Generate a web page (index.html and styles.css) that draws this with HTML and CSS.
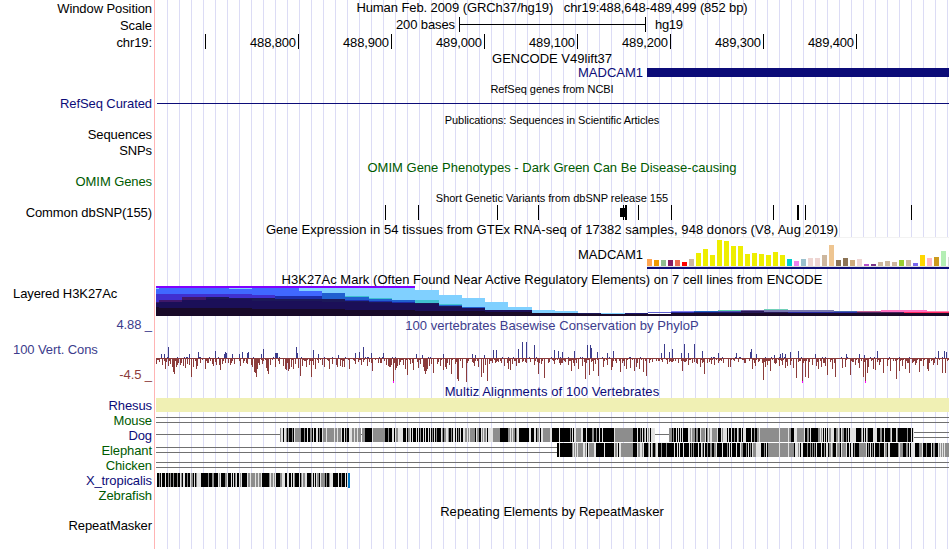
FILE: index.html
```html
<!DOCTYPE html>
<html lang="en">
<head>
<meta charset="utf-8">
<title>Genome tracks</title>
<link rel="stylesheet" href="styles.css">
</head>
<body>
<main class="browser" id="browser"></main>
<script src="tracks.js"></script>
</body>
</html>
```
FILE: styles.css
```css
body { margin: 0; background: #fff; font-family: "Liberation Sans", Arial, sans-serif; font-size: 13px; color: #000; }
.browser { width: 949px; height: 549px; overflow: hidden; display: flex; flex-direction: column;
  background: linear-gradient(#ffb4b4, #ffb4b4) 154px 0 / 1px 100% no-repeat,
    repeating-linear-gradient(90deg, #dcdcf5 0 1px, transparent 1px 12px) 167px 0 / 782px 100% no-repeat; }
.row { display: grid; grid-template-columns: 155px 794px; grid-template-rows: 100%; flex: none; align-items: center; }
.label { padding-right: 3px; text-align: right; white-space: pre; line-height: 15px; letter-spacing: -0.09px; }
.label.left { text-align: left; padding-left: 13px; }
.label.top { align-self: start; }
.label.lift { padding-bottom: 2px; }
.title { text-align: center; white-space: pre; line-height: 15px; }
.small { font-size: 11px; padding-top: 2px; }
.title.lift { padding-bottom: 2px; }
.title.low { padding-top: 2px; }
.small.low { padding-top: 4px; }
.navy { color: #0c0c78; }
.green { color: #005a00; }
.cons { color: #3c3c8c; }
.red { color: #8c3c3c; }
.stack { display: flex; flex-direction: column; justify-content: space-between; height: 65px; align-self: start; margin-top: -16px; }
svg { display: block; }
svg text { font-size: 13px; }
```
FILE: tracks.js
```js
const X0 = 155, W = 794;
const browser = document.getElementById('browser');
const rect = (x, y, w, h, c) => `<rect x="${x}" y="${y}" width="${w}" height="${h}" fill="${c}"/>`;
const text = (x, y, w, s, c = '#000') => `<text x="${x}" y="${y}" textLength="${w}" fill="${c}">${s}</text>`;

// One browser row: label cell on the left, drawing or title on the right.
function row(y, h, label, body, cls = '') {
  const el = document.createElement('section');
  el.className = 'row';
  el.style.height = h + 'px';
  const data = body.startsWith('<rect') || body.startsWith('<text')
    ? `<svg width="${W}" height="${h}" viewBox="${X0} ${y} ${W} ${h}" shape-rendering="crispEdges">${body}</svg>`
    : body;
  el.innerHTML = (label.startsWith('<') ? label : `<div class="label ${cls}">${label}</div>`) + data;
  browser.append(el);
}
const title = (h, s, ls, cls = '') => row(0, h, '', `<div class="title ${cls}" style="letter-spacing:${ls}px">${s}</div>`);

// Runs such as "k3 g1 w2": black, grey, light; "_" is an unaligned gap, "@680" moves to x 680.
const shade = { k: '#000', g: '#8d8d8d', w: '#e2e2e2' };
function runs(x, y, s) {
  let out = '';
  for (const t of s.trim().split(/\s+/)) {
    const n = +t.slice(1);
    if (t[0] === '@') { x = n; continue; }
    if (shade[t[0]]) out += rect(x, y, n, 14, shade[t[0]]);
    x += n;
  }
  return out;
}
const rule = (x1, x2, y) => rect(x1, y, x2 - x1, 1, '#707070');

title(17, 'Human Feb. 2009 (GRCh37/hg19)   chr19:488,648-489,499 (852 bp)', -0.09, 'lift');
browser.lastChild.firstChild.textContent = 'Window Position';
row(17, 17, 'Scale', text(396, 29, 59, '200 bases') + rect(459, 17, 1, 15, '#000') + rect(459, 24, 187, 1, '#000') + rect(645, 17, 1, 15, '#000') + text(655, 29, 28, 'hg19'));
let ruler = rect(205, 34, 1, 15, '#000');
['488,800', '488,900', '489,000', '489,100', '489,200', '489,300', '489,400'].forEach((s, i) => {
  const x = 298 + i * 93;
  ruler += rect(x, 34, 1, 15, '#000') + text(x - 48, 47, 46, s);
});
row(34, 17, 'chr19:', ruler);
title(15, 'GENCODE V49lift37', 0);
row(66, 16, '', text(578, 77, 65, 'MADCAM1', '#0c0c78') + rect(647, 68, 302, 9, '#0c0c78'));
title(15, 'RefSeq genes from NCBI', -0.04, 'small lift');
row(97, 14, 'RefSeq Curated', rect(157, 103, 792, 1, '#0c0c78'), 'navy lift');
title(17, 'Publications: Sequences in Scientific Articles', -0.07, 'small');
row(0, 15, 'Sequences', '<div></div>', 'lift');
row(0, 17, 'SNPs', '<div></div>', 'lift');
title(15, 'OMIM Gene Phenotypes - Dark Green Can Be Disease-causing', 0.01, 'green');
row(0, 13, 'OMIM Genes', '<div></div>', 'green');
title(17, 'Short Genetic Variants from dbSNP release 155', -0.02, 'small low');

let snps = rect(620, 208, 6, 9, '#000');
for (const x of [385, 418, 497, 538, 623, 625, 626, 638, 671, 773, 797, 798, 805, 911]) snps += rect(x, 205, 1, 15, '#000');
row(205, 15, 'Common dbSNP(155)', snps);
title(17, 'Gene Expression in 54 tissues from GTEx RNA-seq of 17382 samples, 948 donors (V8, Aug 2019)', 0.055, 'low');

const expression = [[7,'#ffa54f'],[6,'#ee9a00'],[6,'#8fbc8f'],[6,'#8b1c62'],[6,'#ee6a50'],[4,'#f00'],[7,'#cdb79e'],
  ...[13,17,11,26,25,20,20,12,13,12,11,14,11].map(h => [h, '#eeee00']),
  [7,'#00cdcd'],[5,'#ee82ee'],[7,'#9ac0cd'],[8,'#eed5d2'],[8,'#eed5d2'],[11,'#cdb79e'],[21,'#eec591'],[6,'#8b7355'],[8,'#8b7355'],
  [6,'#cdaa7d'],[7,'#eed5d2'],[2,'#b452cd'],[2,'#7a378b'],[4,'#cdb79e'],[5,'#cdb79e'],[4,'#cdb79e'],[6,'#9acd32'],[6,'#cdb79e'],
  [3,'#7a67ee'],[11,'#ffd700'],[8,'#ffb6c1'],[9,'#cd9b1d'],[15,'#b4eeb4'],[9,'#d9d9d9']];
let gtex = rect(647, 237, 302, 30, '#f2f2f2') + rect(647, 238, 302, 28, '#fff') + text(578, 259, 65, 'MADCAM1');
expression.forEach(([h, c], i) => gtex += rect(647 + i * 7, 266 - h, 5, h, c));
row(237, 35, '', gtex + rect(647, 266, 302, 1, '#ddd') + rect(647, 267, 302, 2, '#0c0c78'));
title(14, 'H3K27Ac Mark (Often Found Near Active Regulatory Elements) on 7 cell lines from ENCODE', 0.04);

// Layered signal: every layer is a list of [start x, top y] steps down to y 316.
const layers = [
  ['#80d0ff', [[156,288],[415,290],[439,295],[462,298],[485,302],[508,307],[532,310],[555,311],[578,313],[625,316]]],
  ['#4068ff', [[156,289],[159,288],[229,289],[252,288],[299,291],[322,316]]],
  ['#40c0d0', [[345,296],[369,298],[392,316],[415,300],[439,304],[462,316]]],
  ['#2060d0', [[322,293],[345,297],[369,299],[392,300],[415,303],[439,305],[462,307],[485,316]]],
  ['#4030d0', [[156,294],[252,295],[275,316]]],
  ['#1c2ca8', [[275,296],[322,299],[345,300],[369,301],[392,302],[415,316]]],
  ['#401868', [[156,302],[159,300],[182,297],[206,316]]],
  ['#1c1858', [[206,297],[229,298],[275,299],[345,301],[369,302],[392,303],[439,306],[462,308],[485,310],[508,312],[532,313],[601,314],[625,316]]],
  ['#1b0f58', [[156,303],[159,302],[182,300],[206,299],[252,301],[322,302],[369,303],[415,304],[439,307],[462,308],[485,310],[532,316]]],
  ['#190a28', [[156,307],[159,308],[252,309],[345,310],[415,311],[485,312],[532,313],[578,314],[671,313],[949,316]]]
];
let h3k = rect(156, 286, 259, 2, '#8000ff');
for (const [c, steps] of layers) steps.forEach(([x, y], i) => {
  const end = i + 1 < steps.length ? steps[i + 1][0] : 949;
  if (y < 316) h3k += rect(x, y, end - x, 316 - y, c);
});
for (const [x, y, w, h, c] of [
  [625,313,23,1,'#1c1870'],[648,312,46,1,'#6060d0'],[671,311,23,1,'#8080f0'],[671,312,23,1,'#2828a0'],
  [694,311,24,1,'#2060c0'],[694,312,24,1,'#1c1870'],[718,310,23,1,'#60d0b0'],[718,311,23,1,'#5050b0'],[718,312,23,1,'#1c1870'],
  [741,310,23,1,'#7060a0'],[741,311,47,2,'#281858'],[764,309,24,1,'#70d0b8'],[764,310,70,2,'#7878b0'],
  [788,312,69,1,'#2828a0'],[834,311,23,1,'#4868b0'],[857,311,24,1,'#c06090'],[857,312,47,1,'#502060'],
  [881,310,46,2,'#ff70c0'],[904,312,45,1,'#ff2860'],[927,311,22,1,'#ff80b0']]) h3k += rect(x, y, w, h, c);
row(286, 30, 'Layered H3K27Ac', h3k, 'left top');
title(17, '100 vertebrates Basewise Conservation by PhyloP', 0.03, 'cons low');

const down = '156:5,159:2,162:6,165:10,168:7,170:5,172:8,173:13,174:15,176:8,177:6,178:4,180:6,183:7,185:9,187:5,189:6,191:18,193:8,196:10,197:7,200:4,205:10,208:4,212:5,213:7,216:6,219:6,220:11,222:5,228:4,230:6,234:5,240:7,243:4,247:5,251:6,252:8,254:13,255:14,256:18,257:10,259:6,262:5,266:9,267:12,268:15,270:6,275:8,279:5,283:7,285:10,286:11,288:12,289:10,291:8,293:10,295:5,298:9,300:17,302:7,306:8,309:6,311:18,313:6,315:10,318:4,322:6,324:8,329:10,332:5,336:6,337:8,340:7,342:8,344:8,349:10,355:5,361:6,367:7,372:12,380:4,386:6,388:7,389:8,390:8,391:6,393:24,395:11,396:9,397:7,399:6,403:6,405:10,407:16,410:5,413:11,418:9,420:5,423:8,424:12,425:15,426:12,427:10,429:7,431:5,433:14,437:5,440:7,443:11,445:8,446:10,449:6,451:15,455:5,457:20,458:22,462:9,466:23,474:7,478:8,481:18,483:14,485:6,487:22,489:5,492:4,501:4,504:7,508:10,510:11,512:5,516:7,519:4,525:3,530:3,534:6,538:15,541:5,544:19,548:4,554:5,560:6,565:3,568:6,571:12,574:7,578:10,582:7,585:20,589:16,593:12,595:5,598:17,603:8,607:6,611:11,612:8,616:4,620:13,624:7,626:10,630:9,634:12,636:8,639:10,643:13,646:17,649:4,662:3,667:5,682:12,688:6,692:4,697:5,700:8,704:15,711:5,714:6,718:4,728:8,730:8,744:4,752:10,755:7,763:21,765:8,767:6,770:12,775:5,779:7,782:6,785:9,787:7,790:6,793:9,796:19,802:23,805:18,808:19,812:6,816:7,818:10,821:8,825:7,827:16,832:10,835:18,842:9,845:8,850:16,855:6,859:9,863:18,865:23,867:14,868:8,873:10,875:11,879:6,883:14,887:7,890:12,896:20,899:12,902:7,905:10,909:14,915:6,919:13,923:7,927:10,928:12,933:6,937:6,942:14,945:14';
const up = '161:4,164:4,168:11,189:4,198:6,215:7,224:4,225:6,226:5,232:4,239:4,242:6,247:5,248:6,261:4,263:9,275:5,276:5,277:5,296:11,297:5,313:8,318:4,338:3,355:5,359:6,363:11,371:5,383:5,416:4,422:3,443:4,472:4,475:3,484:3,493:8,496:8,518:9,522:16,526:16,534:13,554:8,558:7,562:6,574:7,587:13,590:13,591:10,597:6,607:5,613:7,661:5,664:14,669:6,672:9,681:5,684:14,688:5,694:14,702:7,718:5,736:5,750:6,751:9,756:4,774:3,780:4,782:5,785:4,790:6,798:7,815:4,846:4,859:4,864:3,877:7,938:7,944:7,946:6';
const parse = s => s.split(',').map(p => p.split(':').map(Number));
let phylo = rect(156, 358, 793, 1, '#8c3c3c');
// Approximate low-amplitude bars between the listed peaks.
for (let x = 157; x < 949; x++) {
  const n = (x * 7919 + (x * x) % 97) % 13;
  if (n < 6) phylo += rect(x, 358, 1, [2, 3, 4, 2, 3, 5][n], '#8c3c3c');
  else if (n === 7) phylo += rect(x, 357, 1, 1, '#3c3c8c');
}
for (const [x, h] of parse(down)) phylo += rect(x, 358, 1, h + 1, '#8c3c3c');
for (const [x, h] of parse(up)) phylo += rect(x, 358 - h, 1, h, '#3c3c8c');
for (const x of [393, 802, 865]) phylo += rect(x, 381, 1, 2, '#f0f');
row(333, 51, '<div class="stack"><div class="label cons">4.88 _</div><div class="label cons left">100 Vert. Cons</div><div class="label red">-4.5 _</div></div>', phylo);
title(14, 'Multiz Alignments of 100 Vertebrates', 0.1, 'navy');

row(398, 15, 'Rhesus', rect(156, 398, 793, 14, '#f0f0b4'), 'navy');
row(413, 15, 'Mouse', rule(156, 949, 417) + rule(156, 949, 422), 'green');
const dog = `g1 w2 k1 w2 g1 k1 g1 k3 g1 k1 w1 g6 k3 g1 k2 w1 k2 g2 k1 w1 k2 w2 k1 g1 k2 w1 g3 w1 g7 w1 g2 w1 g3 w1 k2 w1 k1 g1 k2 w3 g2 w1 g2 w1 g3 _1 g3 k7 w1 g12 k3 g1 k3 w2 k1 w1 g2 w4 w1 k3 w1 k1 g2
 @410 w1 k1 w1 k3 w1 k1 w1 k1 g1 k2 w1 k1 w1 k2 w1 k1 w1 k1 g1 k1 w1 k1 g1 k4 w1 g1 k1 g2 w1 w1 g1 k2 g1 k1 w2 k1 w1 k1 g1 k1 w1 k2 w2 g2 w1 g1 w1 g5 k1 w1 g2 k2 w1 g1 w1 g2 w1 k1
 @493 g7 k8 g2 w1 g1 w1 g2 k1 g1 w2 @519 k10 w2 k3 w2 k1 g2 w1 k1 w2 @543 g7 w2 k7 w1 k10 g1 k1 w1 k1 w1 w1 g5 @583 k3 w1 k5 g2 k2 g1 k2 w1 k2 w1 k2 @605 k9 w1 g1 @616 g17 k4 w1 k2 g1 k1 w1 k1 g1 w1 k1 w1 g1 w1 k1 w3
 @669 g3 k1 g1 k2 w1 k1 w1 k1 @680 w1 k1 w1 k5 w2 g1 w1 g3 k1 g2 k2 w1 g2 g2 w1 k1 g1 w1 g1 w2 g5 w1 k3 w1 g1 @723 w4 k1 w1 k2 w1 k2 g1 k2 w1 g1 k2 w1 k1
 @746 k5 w1 k2 g1 k2 g2 w1 g19 w1 g8 w1 g2 k3 w3 g7 w1 k2 g2 k1 w1 k7 g2 w1 g1 w1 k1 w1 k1 w1 k1 w1 g2 w3 k2 g2 w1 g1 k1 w1 g2 k2 g1 k1 w1 k1 @856 k5 g1 w1 k1 w1 k1 w1 g1 @868 k5 w1 w3 k3 g2 k2 w1 @885 k5 g1 w1 k4 w1 g1 k1 @899 k8 g1 k3 w1 k1 w1`;
row(428, 15, 'Dog', rule(156, 280, 434) + rect(362, 428, 293, 14, shade.w) + rect(669, 428, 245, 14, shade.w) + rule(361, 362, 434) + rule(655, 669, 434) + rule(914, 949, 432) + rule(914, 949, 437) + runs(280, 428, dog), 'navy');
const elephant = `k2 w1 k12 g1 w1 g1 w1 g1 w1 g5 w2 g1 w1 k1 w1 g5 @596 k8 w1 k9 w1 g2 w1 k1 @621 g12 k4 w1 g2 w2 g1 w1 k4 g1 w1 k1 w1 g1 k2 g1 w1 @658 k3 g1 k4 g1 k7 w1 k2 w1 k1
 @680 k3 w1 k5 w1 k1 g1 k1 g1 k4 w1 k2 w1 g1 k1 w1 k2 g1 k2 g2 k2 g2 @717 k5 w1 k4 g1 k1 w1 k1 w1 k4 w1 k3 w1 g2 k3 g1 k1 w1 k1 g1 k1 w1 g3 @761 k3 g1 k1 w1 k1 @768 g11 w1 g8 w1 g5 k1 w3 g1 w1 k1 w2 k1
 @803 k4 g1 k2 g1 k1 g1 k1 g1 k1 w1 k4 w1 k2 g1 k1 w2 k1 g2 w1 g1 k3 w1 g3 k1 w1 g4 w1 k2 w1 k1 @853 k1 g1 k4 g7 w1 k1 g1 k1 w1 k1 g1 k1 w1 k4 g1 k4 w1 g2 k1 @890 k8 g1 w1 g3 k3 g2 k1 w1 k1 w1
 @915 k4 g3 w1 k3 g1 k4 w1 k1 g2 k3 w1 g1 w1 g1 w1 g1 w1 g6 w1`;
row(443, 15, 'Elephant', rule(156, 557, 447) + rule(156, 557, 452) + rect(557, 443, 392, 14, '#e2e2e2') + runs(557, 443, elephant), 'green');
row(458, 15, 'Chicken', rule(156, 949, 462) + rule(156, 949, 467), 'green');
const frog = `k2 g1 k1 w1 k3 w1 k2 g1 k1 g1 k2 g1 k3 g1 k2 w1 g1 k1 w2 k2 g1 k2 w1 g2 k1 w1 k1 g1 w1 @201 k7 g1 k3 g2 k4 w1 g1 w1 k4 g2 w1 k3 w1 k1 w1 k1 g1 w1 k2 w1 g1 @242 k5 w1 g2 w1 g4 w1 g2 w1 g2 w1 k7 g1 w1 g2 w1 g1 w1 g1 w1 @276 k4 g2 w3 k2 w2 k2 w1 k1 w1 g1 k4 w1 k1 g1 w1 g2 @307 k4 g1 w1 k1 w1 k1 w1 g2 k1 w1 g4 k1 g1 k2 g1 @333 k5 w1 k2 g1 k3 w1 k1 w1`;
row(473, 15, 'X_tropicalis', rect(157, 473, 190, 14, '#e2e2e2') + rect(348, 473, 2, 15, '#0078c8') + runs(157, 473, frog), 'navy');
row(0, 15, 'Zebrafish', '<div></div>', 'green');
title(17, 'Repeating Elements by RepeatMasker', 0.03);
row(0, 11, 'RepeatMasker', '<div></div>');
```
